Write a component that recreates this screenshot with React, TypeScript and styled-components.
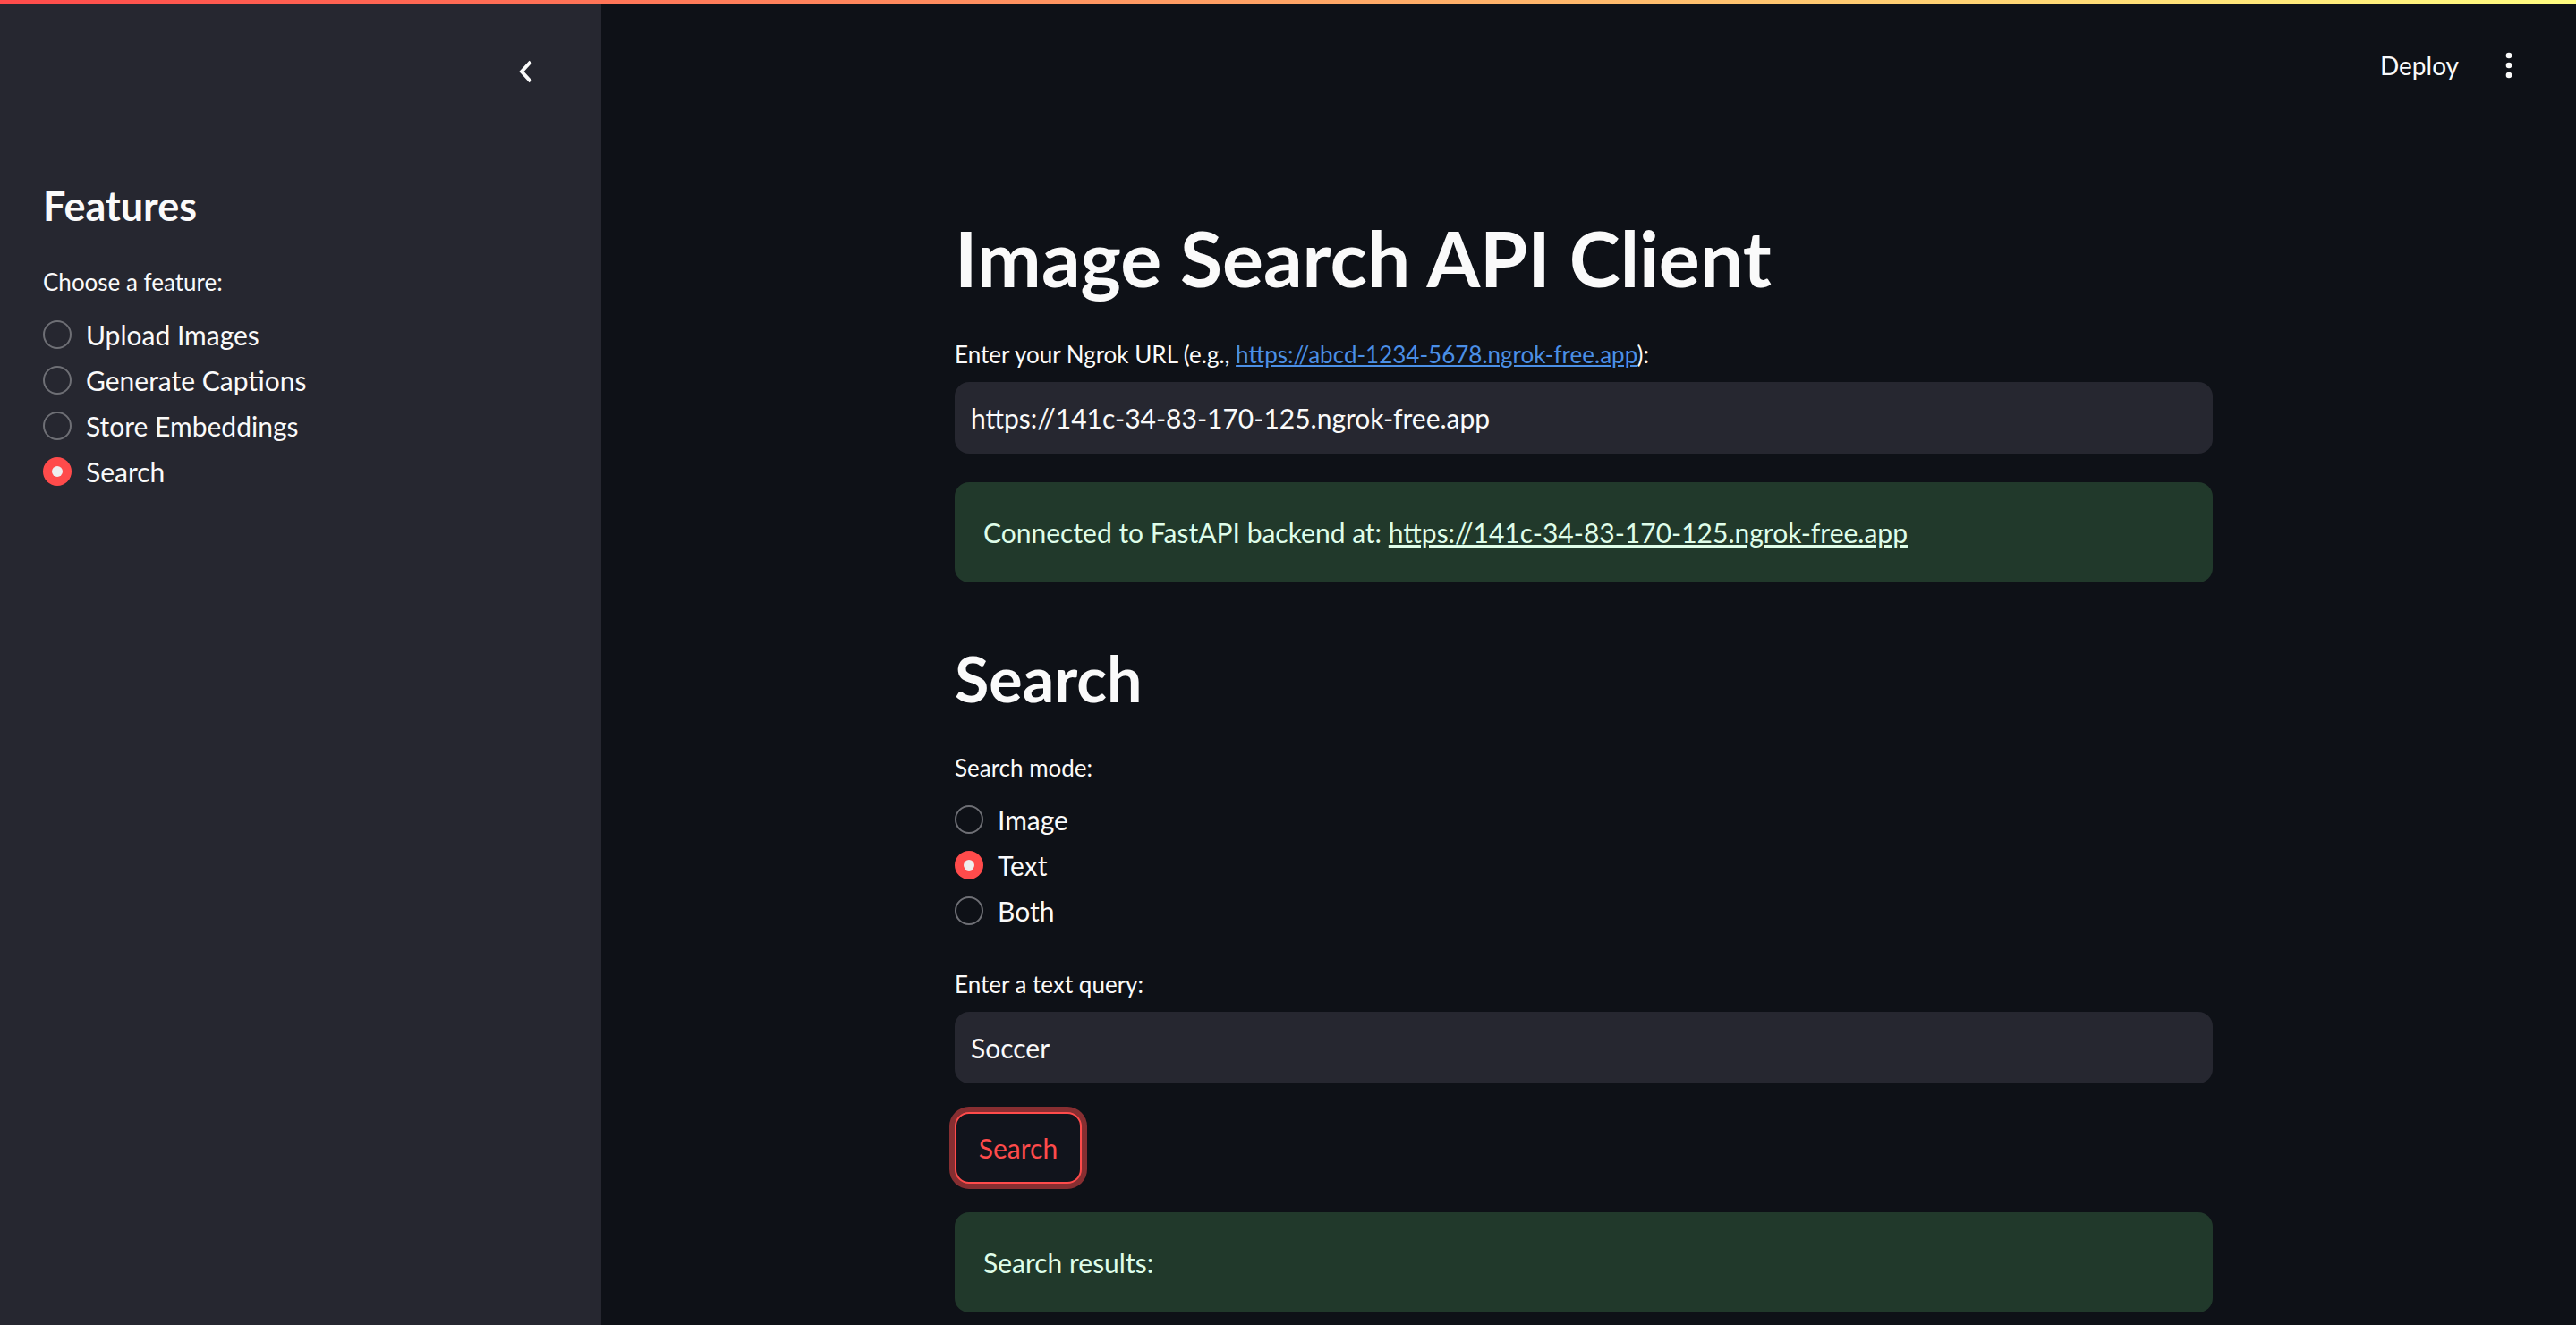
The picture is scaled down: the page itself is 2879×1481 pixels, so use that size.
import React from "react";
import styled, { createGlobalStyle } from "styled-components";

const GlobalStyle = createGlobalStyle`
  html, body { margin: 0; padding: 0; background: #0e1117; }
  body { font-family: Lato, "Noto Sans", sans-serif; color: #fafafa; overflow: hidden; }
  * { box-sizing: border-box; }
`;

const Page = styled.div`
  position: relative;
  display: flex;
  width: 100vw;
  height: 100vh;
  overflow: hidden;
`;

const Decoration = styled.div`
  position: absolute;
  top: 0;
  left: 0;
  right: 0;
  height: 5px;
  background: linear-gradient(90deg, rgb(255, 75, 75), rgb(255, 253, 128));
  z-index: 10;
`;

const Sidebar = styled.aside`
  width: 672px;
  flex: none;
  height: 100%;
  background: #262730;
  display: flex;
  flex-direction: column;
  padding: 0 0 0 48px;
`;

const SidebarTop = styled.div`
  height: 160px;
  display: flex;
  align-items: center;
  justify-content: flex-end;
  padding-right: 70px;
`;

const IconButton = styled.button`
  background: none;
  border: none;
  padding: 0;
  width: 28px;
  height: 32px;
  display: flex;
  align-items: center;
  justify-content: center;
  color: #fafafa;
  cursor: pointer;
`;

const SidebarHeading = styled.h2`
  margin: 44px 0 0;
  font-size: 45px;
  line-height: 53px;
  font-weight: 700;
`;

const WidgetLabel = styled.div<{ $top: number }>`
  margin-top: ${(p) => p.$top}px;
  font-size: 26px;
  line-height: 42px;
  color: #fafafa;
`;

const RadioGroup = styled.div<{ $top: number }>`
  margin-top: ${(p) => p.$top}px;
  display: flex;
  flex-direction: column;
`;

const RadioRow = styled.label`
  height: 51px;
  display: flex;
  align-items: center;
  gap: 16px;
  font-size: 30px;
  color: #fafafa;
`;

const RadioCircle = styled.span<{ $checked: boolean }>`
  width: 32px;
  height: 32px;
  flex: none;
  border-radius: 50%;
  display: flex;
  align-items: center;
  justify-content: center;
  border: ${(p) => (p.$checked ? "none" : "2px solid #6e6f75")};
  background: ${(p) => (p.$checked ? "#ff4b4b" : "transparent")};
  &::after {
    content: "";
    display: ${(p) => (p.$checked ? "block" : "none")};
    width: 12px;
    height: 12px;
    border-radius: 50%;
    background: #eeeeef;
  }
`;

const Main = styled.main`
  flex: 1;
  height: 100%;
  display: flex;
  flex-direction: column;
  padding-right: 11px;
`;

const Header = styled.header`
  height: 146px;
  flex: none;
  display: flex;
  align-items: center;
  justify-content: flex-end;
  gap: 32px;
  padding-right: 40px;
`;

const DeployButton = styled.button`
  background: none;
  border: none;
  padding: 0;
  font-family: inherit;
  font-size: 28px;
  color: #fafafa;
  cursor: pointer;
`;

const MoreButton = styled.button`
  background: none;
  border: none;
  width: 48px;
  height: 48px;
  padding: 0;
  display: flex;
  align-items: center;
  justify-content: center;
  cursor: pointer;
`;

const Column = styled.div`
  width: 1406px;
  margin: 89px auto 0;
  display: flex;
  flex-direction: column;
`;

const Title = styled.h1`
  margin: 0;
  font-size: 86px;
  line-height: 106px;
  font-weight: 700;
  color: #fafafa;
`;

const SectionHeading = styled.h2`
  margin: 65px 0 0;
  font-size: 70px;
  line-height: 84px;
  font-weight: 700;
  color: #fafafa;
`;

const Link = styled.a`
  color: #4b8fe6;
  text-decoration: underline;
`;

const TextInput = styled.input<{ $top: number }>`
  margin-top: ${(p) => p.$top}px;
  height: 80px;
  width: 100%;
  background: #262730;
  border: none;
  border-radius: 16px;
  padding: 0 18px;
  font-family: inherit;
  font-size: 30px;
  color: #fafafa;
  outline: none;
`;

const Alert = styled.div<{ $top: number }>`
  margin-top: ${(p) => p.$top}px;
  height: 112px;
  border-radius: 16px;
  background: #21392b;
  color: #dffde9;
  font-size: 30px;
  display: flex;
  align-items: center;
  padding: 0 32px;
  a { color: #dffde9; text-decoration: underline; }
`;

const PrimaryButton = styled.button`
  margin-top: 32px;
  align-self: flex-start;
  width: 142px;
  height: 80px;
  border: 2px solid #ff4b4b;
  border-radius: 16px;
  background: #11141c;
  color: #ff4b4b;
  font-family: inherit;
  font-size: 30px;
  box-shadow: 0 0 0 6px rgba(255, 75, 75, 0.5);
  cursor: pointer;
`;

type RadioProps = { options: string[]; selected: string; top: number };

const RadioList: React.FC<RadioProps> = ({ options, selected, top }) => (
  <RadioGroup $top={top}>
    {options.map((o) => (
      <RadioRow key={o}>
        <RadioCircle $checked={o === selected} />
        {o}
      </RadioRow>
    ))}
  </RadioGroup>
);

export default function App() {
  const url = "https://141c-34-83-170-125.ngrok-free.app";
  return (
    <>
      <GlobalStyle />
      <Page>
        <Decoration />
        <Sidebar>
          <SidebarTop>
            <IconButton aria-label="Collapse sidebar">
              <svg width="16" height="26" viewBox="0 0 16 26">
                <polyline points="13,2 3,13 13,24" fill="none" stroke="#fafafa" strokeWidth="4" />
              </svg>
            </IconButton>
          </SidebarTop>
          <SidebarHeading>Features</SidebarHeading>
          <WidgetLabel $top={37}>Choose a feature:</WidgetLabel>
          <RadioList
            top={12}
            options={["Upload Images", "Generate Captions", "Store Embeddings", "Search"]}
            selected="Search"
          />
        </Sidebar>
        <Main>
          <Header>
            <DeployButton>Deploy</DeployButton>
            <MoreButton aria-label="Main menu">
              <svg width="8" height="30" viewBox="0 0 8 30">
                <circle cx="4" cy="4" r="3.3" fill="#fafafa" />
                <circle cx="4" cy="15" r="3.3" fill="#fafafa" />
                <circle cx="4" cy="26" r="3.3" fill="#fafafa" />
              </svg>
            </MoreButton>
          </Header>
          <Column>
            <Title>Image Search API Client</Title>
            <WidgetLabel $top={34}>
              Enter your Ngrok URL (e.g.,{" "}
              <Link href="#">https://abcd-1234-5678.ngrok-free.app</Link>):
            </WidgetLabel>
            <TextInput $top={10} defaultValue={url} />
            <Alert $top={32}>
              Connected to FastAPI backend at:&nbsp;<a href="#">{url}</a>
            </Alert>
            <SectionHeading>Search</SectionHeading>
            <WidgetLabel $top={37}>Search mode:</WidgetLabel>
            <RadioList top={11} options={["Image", "Text", "Both"]} selected="Text" />
            <WidgetLabel $top={36}>Enter a text query:</WidgetLabel>
            <TextInput $top={10} defaultValue="Soccer" />
            <PrimaryButton>Search</PrimaryButton>
            <Alert $top={32}>Search results:</Alert>
          </Column>
        </Main>
      </Page>
    </>
  );
}
